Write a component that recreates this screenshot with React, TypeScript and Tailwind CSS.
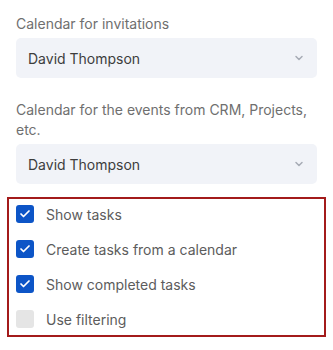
import { Check, ChevronDown } from "lucide-react";

const fieldFont = { fontFamily: "Inter, 'Noto Sans', sans-serif" };

function SelectField({ label, value }: { label: string; value: string }) {
  return (
    <div className="flex flex-col">
      <p className="text-[14px] leading-5 text-[#6f6f6f]">{label}</p>
      <div className="mt-1 flex h-10 items-center justify-between rounded-[5px] bg-[#f1f3f8] pl-3 pr-3">
        <span className="text-[14px] text-[#3d3d3d]">{value}</span>
        <ChevronDown size={12} strokeWidth={3} className="text-[#a7acb5]" />
      </div>
    </div>
  );
}

const options = [
  { label: "Show tasks", checked: true },
  { label: "Create tasks from a calendar", checked: true },
  { label: "Show completed tasks", checked: true },
  { label: "Use filtering", checked: false },
];

export default function App() {
  return (
    <div className="h-[350px] w-[333px] bg-white" style={fieldFont}>
      <div className="flex flex-col gap-[22px] px-4 pt-[14px]">
        <SelectField label="Calendar for invitations" value="David Thompson" />
        <SelectField label="Calendar for the events from CRM, Projects, etc." value="David Thompson" />
      </div>
      <div className="mx-[7px] mt-[13px] flex flex-col gap-[5px] border-2 border-[#a31b1b] px-[7px] pb-px">
        {options.map((o) => (
          <label key={o.label} className="flex h-[30px] items-center gap-3">
            <span
              className={
                o.checked
                  ? "flex h-[18px] w-[18px] items-center justify-center rounded-[3px] bg-[#0d55c7]"
                  : "h-[18px] w-[18px] rounded-[3px] bg-[#e5e5e5]"
              }
            >
              {o.checked ? <Check size={12} strokeWidth={3.5} className="text-white" /> : null}
            </span>
            <span className="text-[14px] text-[#5c5c5c]">{o.label}</span>
          </label>
        ))}
      </div>
    </div>
  );
}
